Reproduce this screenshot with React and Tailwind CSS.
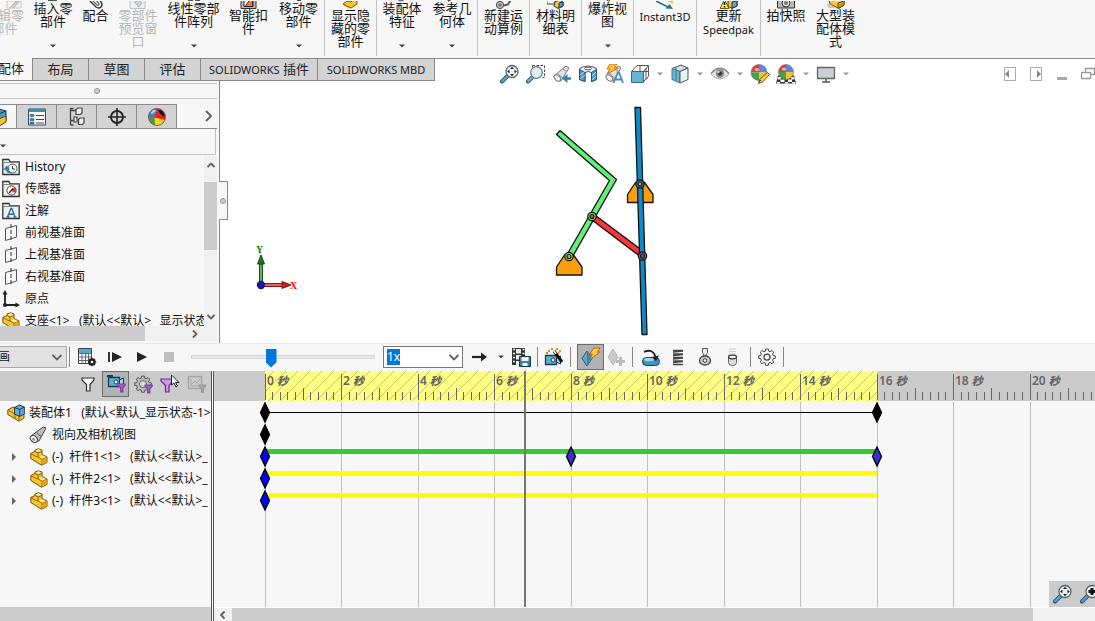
import React from "react";

const FONT = "font-['Noto_Sans','Noto_Sans_CJK_SC',sans-serif]";

function Svg({ w = 20, h = 20, className = "", children }) {
  return (
    <svg width={w} height={h} viewBox={`0 0 ${w} ${h}`} className={`block shrink-0 ${className}`} fill="none" aria-hidden="true">
      {children}
    </svg>
  );
}

function IconButton({ label, className = "h-5 w-5", children }) {
  return (
    <button type="button" aria-label={label} title={label} className={`flex shrink-0 items-center justify-center ${className}`}>
      {children}
    </button>
  );
}

function Caret({ className = "text-[#444]" }) {
  return (
    <svg width="6" height="4" viewBox="0 0 6 4" className={`block ${className}`} aria-hidden="true">
      <path d="M0 .5h6L3 3.5z" fill="currentColor" />
    </svg>
  );
}

/* ---------- ribbon ---------- */

const ribbonArt = {
  pencil: <><path d="M1 7V0h14v7z" fill="#f2f2f2" stroke="#ccc" /><path d="M4 7 11 0M7 7l7-8" stroke="#bbb" strokeWidth="1.5" /></>,
  box: <path d="M4 5h9v2H4z" fill="#555" />,
  clip: <><path d="M2-1l7 7q3 2 5 0 2-2 0-5L12-2" stroke="#333" strokeWidth="1.4" /><path d="M5-1l5 5q2 1 2-1L9-1" stroke="#555" strokeWidth="1.2" /></>,
  preview: <><path d="M1-1v8.500h15v-8.500" fill="#efefef" stroke="#c4c4c4" /><path d="M5 1l5-2 3 3-3 4z" fill="#d0d0d0" stroke="#b5b5b5" /></>,
  pattern: <path d="M3 5h5v2H3zM10 5h5v2h-5z" fill="#555" />,
  smart: <><path d="M1-1v8.500h15v-8.500" fill="#bbb" stroke="#333" /><path d="M4-1h9v6.500H4z" fill="#fff" stroke="#222" /><path d="M5.500 5l4-6h3v6" fill="#f08020" stroke="#622" /></>,
  move: <path d="M7 4h4v3H7z" fill="#444" />,
  show: <><path d="M1 3l4-3 4 1 2-2 4 1v3l-6 4z" fill="#fcc929" stroke="#7a5c00" /><path d="M2 4l6 3" stroke="#b08000" /></>,
  feature: <circle cx="8" cy="4" r="3.500" fill="#777" />,
  reference: <path d="M8 0v6m-3 1 3-2" stroke="#345" strokeWidth="2" />,
  motion: <><circle cx="5" cy="4" r="3.600" fill="#bbb" stroke="#444" /><circle cx="5" cy="4" r="1" fill="#fff" stroke="#444" /><path d="M9 4.500l4-1 3-5" stroke="#555" strokeWidth="2" /></>,
  bom: <><path d="M0-1h8v4H0z" fill="#fff" stroke="#345" /><path d="M8 1l4-2 4 2v4l-5 2.500-4-2.500z" fill="#fcc929" stroke="#333" /><path d="M12 2v5l4-2V1z" fill="#4d9cc5" stroke="#234" /></>,
  explode: <path d="M5 4l4-4 4 3-3 4.500z" fill="#fcc929" stroke="#7a5c00" />,
  instant: <><path d="M0 0l12 6" stroke="#2b7299" strokeWidth="1.600" /><path d="M17 8 9.500 7.500l4-4.500z" fill="#2b7299" /><path d="M9-1h8v4z" fill="#fcc929" /></>,
  update: <><path d="M8 0l5-2 4 2v5l-5 2.500-4-2.500z" fill="#fcc929" stroke="#333" /><path d="M12 1v6l5-2V0z" fill="#69a8ca" stroke="#234" /><path d="M4.500-1.500l4.500 9h-9z" fill="#ffe34d" stroke="#7a5c00" /><path d="M4.500 1v3m0 1v1.400" stroke="#111" strokeWidth="1.400" /></>,
  camera: <><path d="M.5-1h17v8H.5z" fill="#bbb" stroke="#333" /><circle cx="9" cy="2" r="4" fill="#ddd" stroke="#333" /><circle cx="9" cy="2" r="2" fill="#777" /></>,
  large: <><path d="M2 0l6-3 9 3v4l-5 3.500-9-4.500z" fill="#fcc929" stroke="#665000" /><path d="M11 2v5.500l6-3.500V0z" fill="#d99b10" stroke="#665000" /><path d="M0 4h4m-3 2h7" stroke="#999" /></>,
};

const ribbon = [
  { art: "pencil", lines: ["编辑零", "部件"], w: "w-7", off: true, cut: true },
  { art: "box", lines: ["插入零", "部件"], w: "w-[50px]", drop: true },
  { art: "clip", lines: ["配合"], w: "w-[35px]" },
  { art: "preview", lines: ["零部件", "预览窗", "口"], w: "w-[50px]", off: true },
  { art: "pattern", lines: ["线性零部", "件阵列"], w: "w-[61px]", drop: true },
  { art: "smart", lines: ["智能扣", "件"], w: "w-[49px]" },
  { art: "move", lines: ["移动零", "部件"], w: "w-[51px]", drop: true, end: true },
  { art: "show", lines: ["显示隐", "藏的零", "部件"], w: "w-[51px]", end: true },
  { art: "feature", lines: ["装配体", "特征"], w: "w-[50px]", drop: true },
  { art: "reference", lines: ["参考几", "何体"], w: "w-[50px]", drop: true, end: true },
  { art: "motion", lines: ["新建运", "动算例"], w: "w-[51px]", end: true },
  { art: "bom", lines: ["材料明", "细表"], w: "w-[51px]", end: true },
  { art: "explode", lines: ["爆炸视", "图"], w: "w-[51px]", drop: true, end: true },
  { art: "instant", lines: ["Instant3D"], w: "w-[62px]", end: true },
  { art: "update", lines: ["更新", "Speedpak"], w: "w-[63px]", end: true },
  { art: "camera", lines: ["拍快照"], w: "w-[50px]" },
  { art: "large", lines: ["大型装", "配体模", "式"], w: "w-[49px]" },
];

function RibbonItem({ item }) {
  return (
    <>
      <button
        type="button"
        disabled={item.off}
        className={`flex h-[55px] shrink-0 flex-col overflow-hidden ${item.w} ${item.cut ? "items-end pr-1" : "items-center"} ${item.off ? "text-[#b8b8b8]" : "text-[#111]"}`}
      >
        <span className={`flex items-end overflow-hidden ${item.drop ? "h-0.5" : "h-[9px]"}`}>
          <Svg w={18} h={8}>{ribbonArt[item.art]}</Svg>
        </span>
        <span className="flex flex-1 flex-col text-center text-[13px] leading-[13px] whitespace-nowrap">
          {item.lines.map((l) => (
            <span key={l} className={/^[A-Z]/.test(l) ? "pt-px text-[11px]" : ""}>{l}</span>
          ))}
        </span>
        {item.drop && <span className="pb-[7px]"><Caret /></span>}
      </button>
      {item.end && <span className="h-14 w-px shrink-0 bg-[#c3c3c3]" />}
    </>
  );
}

/* ---------- command tabs and view toolbar ---------- */

const tabs = [
  ["", "布局", "w-14"],
  ["", "草图", "w-14"],
  ["", "评估", "w-14"],
  ["SOLIDWORKS", " 插件", "w-[117px]"],
  ["SOLIDWORKS MBD", "", "w-[118px]"],
];

function Sphere({ cx, cy, r }) {
  return (
    <>
      <path d={`M${cx} ${cy}V${cy - r}A${r} ${r} 0 0 0 ${cx - r} ${cy}z`} fill="#e23b3b" />
      <path d={`M${cx} ${cy}V${cy - r}A${r} ${r} 0 0 1 ${cx + r} ${cy}z`} fill="#5b86e0" />
      <path d={`M${cx} ${cy}H${cx - r}A${r} ${r} 0 0 0 ${cx} ${cy + r}z`} fill="#37a948" />
      <path d={`M${cx} ${cy}H${cx + r}A${r} ${r} 0 0 1 ${cx} ${cy + r}z`} fill="#f5c32c" />
      <circle cx={cx} cy={cy} r={r} stroke="#777" strokeWidth=".7" />
      <ellipse cx={cx - 2} cy={cy - 3} rx="2.4" ry="1.6" fill="#fff" opacity=".6" />
    </>
  );
}

function Magnifier({ plus }) {
  return (
    <Svg>
      <path d="M2 17.5 8 11.5" stroke="#24506b" strokeWidth="4" strokeLinecap="round" />
      <path d="M2.3 17.2 8 11.5" stroke="#5aa4cb" strokeWidth="2.4" strokeLinecap="round" />
      <circle cx="12" cy="7.5" r="6" fill="#eaf4f8" stroke="#5d6468" strokeWidth="1.3" />
      {plus
        ? <path d="M12 4v7M8.5 7.5h7" stroke="#111" strokeWidth="3" />
        : <path d="M12 2.700l2 2.300h-4zM12 12.300l2-2.300h-4zM7.200 7.500l2.300-2v4zM16.800 7.500l-2.300-2v4z" fill="#222" />}
    </Svg>
  );
}

const Telescope = () => (
  <>
    <path d="M2 12 14 2l3 2-8 13q-5 0-7-5z" fill="#e2e2e2" stroke="#777" />
    <path d="M6 9.500q1 3 4.500 4M11 5l3.500 2.500" stroke="#888" />
    <ellipse cx="5.300" cy="14" rx="2.400" ry="3.800" transform="rotate(-48 5.300 14)" fill="#f6f6f6" stroke="#777" />
  </>
);

const viewTools = [
  ["整屏显示全图", <Magnifier />],
  ["局部放大", (
    <Svg>
      <path d="M6.500 1.500h12v12" stroke="#444" strokeDasharray="2.500 1.500" />
      <path d="M6.500 1.500v3M18.500 13.500h-3" stroke="#444" strokeDasharray="2 1.500" />
      <path d="M2 17.500l4-4" stroke="#24506b" strokeWidth="4" strokeLinecap="round" />
      <path d="M2.300 17.200l4-4" stroke="#6fb4d6" strokeWidth="2.400" strokeLinecap="round" />
      <circle cx="10.500" cy="8.500" r="5.800" fill="#dfecf1" stroke="#6d7478" strokeWidth="1.200" />
    </Svg>
  )],
  ["上一视图", <Svg><Telescope /><path d="M19 14.500h-4" stroke="#3782ad" strokeWidth="2.500" /><path d="M10 14.500l5.500-4.500v9z" fill="#3782ad" /></Svg>],
  ["剖面视图", (
    <Svg>
      <path d="M1.500 4.500q8-5 17 0v11l-5 2V8.500q-3-2-6.500 0v9l-5.500-2z" fill="#e8edf0" stroke="#555" />
      <path d="M1.500 5.500 7 8.500v9l-5.500-2zM18.500 5.500l-5 3v9l5-2z" fill="#4b9bc4" stroke="#24506b" />
      <path d="M2 11l4-3M2 15l5-4M14 12l4-4M14 16l4-4" stroke="#b9dcec" />
      <ellipse cx="10" cy="4.500" rx="3.500" ry="1.300" fill="#fff" stroke="#555" />
    </Svg>
  )],
  ["动态注解视图", (
    <Svg>
      <Telescope />
      <path d="M6 0h7l-3 4h4L3 10l3-5H3z" fill="#ffc933" stroke="#d9641b" />
      <path d="M9.500 19 14 8.500h1L19 19M11.500 15.500h6" stroke="#4a8db0" strokeWidth="1.800" />
    </Svg>
  )],
  ["视图定向", (
    <Svg>
      <path d="M1.500 7.500 7 1.500h11.500v11l-5 5" fill="#fff" stroke="#555" />
      <path d="M13.500 7.500l5-6M10 1.500v6M1.500 7.500h17M16 4v11" stroke="#555" />
      <path d="M1.500 7.500h12v11h-12z" fill="#69b1d3" stroke="#2f6b8c" />
    </Svg>
  ), true],
  ["显示样式", (
    <Svg>
      <path d="M2 4.500 11 1l7 3-8 3.500z" fill="#c9e4f0" stroke="#555" />
      <path d="M2 4.500l8 3V19l-8-3.500z" fill="#6db4d4" stroke="#3f7896" />
      <path d="M10 7.500 18 4v11.500L10 19z" fill="#e6f2f7" stroke="#555" />
      <path d="M6 3v13.500" stroke="#3f7896" />
    </Svg>
  ), true],
  ["隐藏/显示项目", (
    <Svg>
      <path d="M1 10q9-11 18 0-9 10-18 0z" fill="#e6e6e6" stroke="#aaa" />
      <circle cx="10" cy="9.500" r="4.200" fill="#8a8a8a" />
      <circle cx="10" cy="9.500" r="2" fill="#333" />
      <path d="M1 9.500Q10-1 19 9.500" stroke="#888" strokeWidth="1.300" />
      <circle cx="8.500" cy="8" r="1" fill="#fff" />
    </Svg>
  ), true],
  ["编辑外观", (
    <Svg>
      <Sphere cx={9} cy={8.500} r={8} />
      <path d="M17.500 8.500l2 2-7 7.500-4 1.500 1-4z" fill="#ffd23f" stroke="#6b4a12" />
      <path d="M9 18l2-2" stroke="#333" />
    </Svg>
  )],
  ["应用布景", (
    <Svg>
      <path d="M2 11.500h16l2 8H0z" fill="#333" />
      <path d="M2 13h3l-.5 2.500h-3zM15 13h3l.5 2.500h-3zM4.500 15.500h4V18h-4zM12 15.500h4V18h-4zM9 18h3v1.500H9zM1 18h3v1.500H1zM16 18h3v1.500h-3z" fill="#fff" />
      <Sphere cx={10} cy={8} r={7.500} />
    </Svg>
  ), true],
  ["视图设定", (
    <Svg>
      <path d="M1.500 3.500h17v11h-17z" fill="#c9d0d3" stroke="#666" strokeWidth="1.300" />
      <path d="M10 15v3M6 18h8" stroke="#555" strokeWidth="1.500" />
    </Svg>
  ), true],
];

const windowTools = [
  ["左侧窗格", <Svg><path d="M4.500 3.500h11v13h-11z" stroke="#a8a8a8" /><path d="M9 6v8l-4-4z" fill="#888" /></Svg>],
  ["右侧窗格", <Svg><path d="M4.500 3.500h11v13h-11z" stroke="#a8a8a8" /><path d="M11 6v8l4-4z" fill="#888" /></Svg>],
  ["最小化", <Svg><path d="M5 13h10v3H5z" fill="#a8a8a8" /></Svg>],
  ["还原", <Svg><path d="M3.500 8.500h9v6h-9zM7.500 8V4.500h9v6h-4" stroke="#999" strokeWidth="1.300" /></Svg>],
];

/* ---------- feature manager ---------- */

const Part = ({ size = 18 }) => (
  <svg width={size} height={size} viewBox="0 0 18 18" fill="none" className="block shrink-0" aria-hidden="true">
    <path d="M.8 5.500 5 3.500V2L8.500.800 12 2v4.500l5 2.500v5.500L11.500 17.200.8 10.500z" fill="#fcc62b" stroke="#6b5210" />
    <path d="M5 3.500 8 5v4l4 2v0l5-2M.8 5.500 5 8M8 5l4-1.500M12 11v6M5 8l3 1" stroke="#8b6a10" />
    <path d="M5.500 2.400 8.500 1.300l3 1.100L8.500 3.800zM9 8.500l3-1.300L16 9l-4 1.700z" fill="#ffe88a" />
    <path d="M12.300 11.400l4.300-2v5l-4.300 2.200z" fill="#e5a313" />
  </svg>
);

const Folder = ({ children }) => (
  <Svg w={18} h={18}>
    <path d="M.8 16.500V1.500h6l1.500 2.500h8.900v12.500z" fill="#efefef" stroke="#333" strokeWidth="1.300" />
    <path d="M1 4.500h16" stroke="#888" />
    {children}
  </Svg>
);

const Plane = () => (
  <Svg w={18} h={18}>
    <path d="M3.500 4.500v12l11-3.500V1.500z" stroke="#555" />
    <path d="M9 0v18" stroke="#333" strokeDasharray="4 2" />
  </Svg>
);

const features = [
  ["History", <Folder><circle cx="10.500" cy="10.500" r="4.500" fill="#fff" stroke="#555" /><path d="M10.500 8v3h2.500" stroke="#333" /><path d="M4 10.500q1 4.500 5 4M2.800 11l2-2.500 2 2.500z" stroke="#2d7faa" fill="#2d7faa" strokeWidth="1.300" /></Folder>],
  ["传感器", <Folder><circle cx="9.500" cy="10.500" r="4.600" fill="#fff" stroke="#444" /><path d="M9.500 10.500l4-2.500v4.500z" fill="#e23b1d" stroke="#e23b1d" /><path d="M7 13l4.500-5" stroke="#222" strokeWidth="1.200" /></Folder>],
  ["注解", <Folder><path d="M5.500 15 9 6.500h.8L13 15M6.500 12.200h5.500M4.500 15h3M11.500 15h3" stroke="#2d6f96" strokeWidth="1.400" /></Folder>],
  ["前视基准面", <Plane />],
  ["上视基准面", <Plane />],
  ["右视基准面", <Plane />],
  ["原点", <Svg w={18} h={18}><path d="M3 3v12h12" stroke="#222" strokeWidth="1.800" /><path d="M3 0l2.500 4.500h-5zM18 15l-4.500 2.500v-5z" fill="#222" /><circle cx="3" cy="15" r="2" fill="#222" /></Svg>],
  ["支座<1>   (默认<<默认>_ 显示状态", <Part />],
];

const panelTabs = [
  ["属性", (
    <Svg>
      <path d="M1.500 2h17v16h-17z" fill="#fff" stroke="#2d4c5e" />
      <path d="M1.500 2h17v3h-17z" fill="#3f8db5" />
      <path d="M3 7.500h4v2H3zM3 11.500h4v2H3zM3 15h4v2H3z" fill="#3f8db5" stroke="#2d4c5e" strokeWidth=".6" />
      <path d="M9 8.500h8M9 12.500h8M9 16h8" stroke="#2d4c5e" strokeWidth="1.200" />
    </Svg>
  )],
  ["配置", (
    <Svg>
      <path d="M3.500 1v17M3 3.500h7M3 13.500h7M3.500 1.500h3M3.500 18h3" stroke="#444" strokeWidth="1.300" />
      <path d="M9 2.500 11 1h4v5l-1.500 1.500H9zM11.500 12.500l1.500-1.500h4v5l-1.500 1.500h-4zM7 10h3v5H7z" fill="#eee" stroke="#444" strokeWidth="1.200" />
    </Svg>
  )],
  ["标注专家", <Svg><circle cx="10" cy="10" r="6" stroke="#222" strokeWidth="1.800" /><path d="M10 1v18M1 10h18" stroke="#222" strokeWidth="1.600" /></Svg>],
  ["显示", (
    <Svg>
      <circle cx="10" cy="10" r="8.500" fill="#e0241f" />
      <path d="M1.600 9Q2 3 8 1.800L10 4 7 10z" fill="#3f7fe0" />
      <path d="M1.600 9l6 1.500L8 18.200Q2 16 1.600 9z" fill="#2ca944" />
      <path d="M7.500 10.500 18 13q-3 6.500-10 5.200z" fill="#ffd21f" />
      <path d="M11 2.500q6 1 7 7-5-1-7-7z" fill="#111" />
      <path d="M4 5q2-3 5-2-1 3-5 4z" fill="#fff" opacity=".6" />
      <circle cx="10" cy="10" r="8.500" stroke="#555" strokeWidth=".8" />
    </Svg>
  )],
];

function Chevron({ d, className = "" }) {
  return (
    <Svg w={10} h={10} className={className}>
      <path d={d} stroke="#606060" strokeWidth="1.800" />
    </Svg>
  );
}
const UP = "M1.500 7 5 3.500 8.500 7";
const DOWN = "M1.500 3 5 6.500 8.500 3";
const THIN_DOWN = "M.5 3 5 7.500 9.500 3";
const LEFT = "M6.500 1.500 3 5l3.500 3.500";
const RIGHT = "M3 1.500 6.500 5 3 8.500";

function FeaturePanel() {
  return (
    <aside className="relative flex w-[220px] shrink-0 flex-col border-r border-[#888] bg-[#f7f7f7] pt-0.5 pr-0.5 pb-0.5">
      <div className="flex h-4 items-center justify-center border-y border-[#c6c6c6] pr-6">
        <span className="h-1.5 w-1.5 rounded-full border border-[#999] bg-[#ccc]" />
      </div>
      <div className="mt-[5px] flex h-[25px] border-b border-[#8c8c8c]">
        <button type="button" aria-label="设计树" className="flex w-4 items-center justify-end overflow-hidden border-t border-[#8c8c8c]">
          <Svg className="mr-[9px]">
            <path d="M7 5l5-3 7 2v10l-7 5-8-4z" fill="#4c9cc3" stroke="#234" />
            <path d="M12 12l7-3v6l-7 4z" fill="#fcc62b" stroke="#543" />
            <path d="M12 7l7-3M12 7v12" stroke="#234" />
          </Svg>
        </button>
        <div className="flex border-r border-[#8c8c8c]">
          {panelTabs.map(([label, icon]) => (
            <IconButton key={label} label={label} className="w-10 border-t border-l border-[#8c8c8c] bg-[#d3d3d3]">{icon}</IconButton>
          ))}
        </div>
        <IconButton label="更多" className="mr-0.5 ml-auto w-3">
          <Svg w={12} h={14}><path d="M3 2l5 5-5 5" stroke="#666" strokeWidth="2" /></Svg>
        </IconButton>
      </div>
      <div className="mr-px flex h-[26px] items-center border-r border-b border-[#c3c3c3] pt-2">
        <Caret />
      </div>
      <div className="mt-px flex h-[170px]">
        <ul className="min-w-0 flex-1 overflow-hidden">
          {features.map(([name, icon]) => (
            <li key={name} className="flex h-[22px] items-center gap-[5px] pl-0.5 text-[12px] whitespace-pre text-[#111]">
              {icon}
              <span>{name}</span>
            </li>
          ))}
        </ul>
        <div className="flex w-[13px] flex-col items-center bg-[#f0f0f0]">
          <Chevron d={UP} className="mt-1 mb-3" />
          <span className="h-[68px] w-full bg-[#cdcdcd]" />
          <Chevron d={DOWN} className="mt-auto mb-1" />
        </div>
      </div>
      <div className="flex h-[15px] items-center bg-[#f0f0f0]">
        <span className="h-full w-2/3 bg-[#cdcdcd]" />
        <Chevron d={RIGHT} className="mr-[17px] ml-auto" />
      </div>
      <div className="absolute top-[100px] -right-[9px] z-10 flex h-[39px] w-[9px] items-center justify-center border border-l-0 border-[#888] bg-[#f7f7f7]">
        <span className="h-1.5 w-1.5 rounded-full border border-[#999] bg-[#ccc]" />
      </div>
    </aside>
  );
}

/* ---------- model view ---------- */

function Joint({ x, y, ring, core }) {
  return (
    <>
      <circle cx={x} cy={y} r="4.200" fill={ring} stroke="#111" strokeWidth="1.200" />
      <circle cx={x} cy={y} r="2" fill={core} stroke="#111" strokeWidth="1.100" />
    </>
  );
}

function ModelView() {
  return (
    <main className="min-w-0 flex-1 bg-white">
      <svg width="100%" height="260" className="block" fill="none" role="img" aria-label="连杆机构">
        <g transform="translate(-220 -81)">
          <g stroke="#111" strokeWidth="1.300" strokeLinejoin="round">
            <path d="M556.500 275v-8l8-12h9l8.500 12v8z" fill="#ff9e0d" />
            <path d="M627.500 202.500v-8l8-12h9l8.500 12v8z" fill="#ff9e0d" />
            <path d="M595.500 215.500 645 252.500 641.500 257.500 592 220z" fill="#fb3438" />
            <path d="M560 130.500 616.500 179.500 571.500 258.500 566.500 255.500 609.500 180.500 556.500 134.500z" fill="#62ef7c" />
            <path d="M635 107.500h5.500L647 334.500h-5z" fill="#0e8bcb" />
          </g>
          <Joint x={569} y={256.500} ring="#62ef7c" core="#ff9e0d" />
          <Joint x={592} y={216.500} ring="#62ef7c" core="#fb3438" />
          <Joint x={640} y={184} ring="#0e8bcb" core="#ff9e0d" />
          <Joint x={642.500} y={256} ring="#0e8bcb" core="#fb3438" />
          <path d="M259.500 284v-20h3v20z" fill="#67ad68" stroke="#174f17" />
          <path d="M261 255l3.500 9h-7z" fill="#1d761d" stroke="#124d12" />
          <path d="M264 283.500h19v3h-19z" fill="#e26565" stroke="#8f1414" />
          <path d="M291 285l-9 3.500v-7z" fill="#cf1818" stroke="#8f1414" />
          <circle cx="261" cy="285" r="4.200" fill="#16167e" />
          <path d="M259 283h4l-4 4h4" stroke="#1a1aff" />
          <text x="256" y="253" fill="#0a800a" className="font-['Liberation_Serif',serif] text-[10px] font-bold">Y</text>
          <text x="290" y="289" fill="#f00" className="font-['Liberation_Serif',serif] text-[10px] font-bold">X</text>
        </g>
      </svg>
    </main>
  );
}

/* ---------- motion toolbar ---------- */

const Sep = () => <span className="h-5 w-px shrink-0 bg-[#888]" />;

const CameraBody = () => (
  <>
    <path d="M1.500 8.500h11v9h-11z" fill="#62afd2" stroke="#173b50" strokeWidth="1.300" />
    <path d="M12.500 11l4-2v8l-4-2z" fill="#a9d3e6" stroke="#173b50" />
    <circle cx="9" cy="13" r="2" fill="#eaf6fb" stroke="#173b50" />
  </>
);

const Calc = () => (
  <Svg>
    <path d="M1.500 1.500h13v15h-13z" fill="#fff" stroke="#444" />
    <path d="M2 2h12v4H2z" fill="#5aa4cb" />
    <path d="M1.500 6.500h13M1.500 10h13M1.500 13.500h13M5 6v10M8.500 6v10M11.500 6v10" stroke="#666" />
    <circle cx="15" cy="15" r="2.500" fill="#fff" stroke="#222" strokeWidth="2.400" />
    <path d="M15 10.800v8.400M10.800 15h8.400M12 12l6 6M18 12l-6 6" stroke="#222" strokeWidth="1.200" />
    <circle cx="15" cy="15" r="1.300" fill="#fff" />
  </Svg>
);

const gearPath = "M8.700 2h2.600l.4 2.100 1.500.6L15 3.500l1.700 1.700-1.100 1.800.6 1.500 2.100.4v2.400l-2.100.4-.6 1.500 1.100 1.800L15 16.700l-1.800-1.100-1.500.6-.4 2.100H8.700l-.4-2.100-1.500-.6L5 16.700 3.300 15l1.100-1.800-.6-1.500-2.100-.4V8.900l2.100-.4.6-1.500-1.100-1.800L5 3.500l1.800 1.200 1.500-.6z";

function MotionToolbar() {
  return (
    <div className="flex h-[27px] shrink-0 items-center gap-[7px] bg-[#f7f7f7] pb-0.5">
      <div className="flex items-center gap-0.5">
        <div className="flex h-[22px] w-[67px] items-center justify-end overflow-hidden border-y border-r border-[#aaa] bg-[#e1e1e1]">
          <select aria-label="算例类型" className="w-[78px] shrink-0 appearance-none text-[12px] text-[#111]">
            <option>动画</option>
          </select>
          <Chevron d={THIN_DOWN} className="-ml-3 mr-1" />
        </div>
        <Sep />
      </div>
      <IconButton label="计算"><Calc /></IconButton>
      <IconButton label="从头播放"><Svg><path d="M5 5v10" stroke="#333" strokeWidth="2" /><path d="M8 5l10 5-10 5z" fill="#222" /></Svg></IconButton>
      <IconButton label="播放"><Svg><path d="M6 5l10 5-10 5z" fill="#222" /></Svg></IconButton>
      <IconButton label="停止"><Svg><path d="M6 5h10v10H6z" fill="#bfbfbf" /></Svg></IconButton>
      <input
        type="range"
        aria-label="时间"
        defaultValue="43"
        className="ml-1.5 h-5 w-[184px] shrink-0 appearance-none bg-transparent [&::-webkit-slider-runnable-track]:h-1 [&::-webkit-slider-runnable-track]:border [&::-webkit-slider-runnable-track]:border-[#d6d6d6] [&::-webkit-slider-runnable-track]:bg-[#e7eaea] [&::-webkit-slider-thumb]:-mt-[7px] [&::-webkit-slider-thumb]:h-[19px] [&::-webkit-slider-thumb]:w-[11px] [&::-webkit-slider-thumb]:appearance-none [&::-webkit-slider-thumb]:bg-[#0078d7] [&::-webkit-slider-thumb]:[clip-path:polygon(0_0,100%_0,100%_72%,50%_100%,0_72%)]"
      />
      <div className="ml-px flex h-[22px] w-20 shrink-0 items-center border border-[#777] bg-white pl-[3px]">
        <input aria-label="播放速度" defaultValue="1x" className="h-4 w-[13px] bg-[#0078d7] text-[12px] text-white" />
        <Chevron d={THIN_DOWN} className="mr-[3px] ml-auto" />
      </div>
      <IconButton label="播放模式"><Svg><path d="M2 10h11" stroke="#222" strokeWidth="2.200" /><path d="M17 10l-6 4.500v-9z" fill="#222" /></Svg></IconButton>
      <IconButton label="模式选项" className="h-5 w-[7px]"><Caret /></IconButton>
      <div className="flex items-center gap-1.5">
        <IconButton label="保存动画">
          <Svg>
            <path d="M1 1h13v17H1z" fill="#333" />
            <path d="M5 2h5v4.500H5zM5 8h5v4.500H5zM5 14h4v4H5z" fill="#e9eef0" />
            <path d="M2 2.500h2m-2 4h2m-2 4h2m-2 4h2m7.500-12h2m-2 4h2" stroke="#fff" strokeWidth="1.600" />
            <path d="M8.500 9.500h11v10h-11z" fill="#3a7fa7" stroke="#17384c" />
            <path d="M10.500 10h7v4h-7zM11.500 16h5v3h-5z" fill="#f3f3f3" />
          </Svg>
        </IconButton>
        <Sep />
        <IconButton label="动画向导">
          <Svg>
            <CameraBody />
            <path d="M10 4l8 11" stroke="#111" strokeWidth="3" />
            <path d="M10 4l2 2.800" stroke="#fff" strokeWidth="1.600" />
            <path d="M4 3h2v2H4zM7 1h2v2H7zM12 1h2v2h-2zM15 3h2v2h-2zM2 5h2v2H2zM14 5h1.500v1.500H14z" fill="#e08a18" />
          </Svg>
        </IconButton>
        <Sep />
        <div className="flex items-center gap-0.5">
          <IconButton label="自动键码" className="h-[26px] w-[27px] border border-[#6d6d6d] bg-[#b2b2b2]">
            <Svg>
              <path d="M6 4l5 7.500L6 19l-5-7.500z" fill="#5ba9cf" stroke="#2d5971" />
              <path d="M6 4v15l5-7.500z" fill="#3d86ad" />
              <path d="M13 1h6l-3 4h3L8 13l3.500-6H8.500z" fill="#ffd23b" stroke="#d0541a" />
            </Svg>
          </IconButton>
          <IconButton label="添加键码"><Svg><path d="M7 2l5 8-5 8-5-8z" fill="#c9c9c9" stroke="#bbb" /><path d="M14.500 10v9M10 14.500h9" stroke="#bdbdbd" strokeWidth="3" /></Svg></IconButton>
        </div>
        <Sep />
        <div className="flex items-center gap-[7px] px-0.5">
          <IconButton label="马达">
            <Svg>
              <rect x="1.500" y="10.500" width="17" height="8" rx="4" fill="#4196c1" stroke="#173b50" />
              <ellipse cx="8" cy="12.500" rx="5" ry="1.800" fill="#a6d5e9" />
              <path d="M3 5q9-4 11.500 5" stroke="#222" strokeWidth="1.800" />
              <path d="M11 10l7-1.500-3 6z" fill="#222" />
            </Svg>
          </IconButton>
          <IconButton label="弹簧"><Svg><path d="M5 3.500h10M5 7h10M5 10.500h10M5 14h10M5 17.500h10M5 5.200l10-1M5 8.700l10-1M5 12.200l10-1M5 15.700l10-1" stroke="#444" strokeWidth="1.300" /></Svg></IconButton>
          <IconButton label="接触">
            <Svg>
              <path d="M7.500 1.500h5v4L11 8v3H9V8L7.500 5.500z" fill="#eee" stroke="#555" />
              <ellipse cx="10" cy="13.500" rx="5.500" ry="4.500" fill="#ccc" stroke="#444" strokeWidth="1.300" />
              <circle cx="10" cy="13.500" r="1.800" fill="#fff" stroke="#333" />
            </Svg>
          </IconButton>
          <IconButton label="引力">
            <Svg>
              <path d="M7 2h7M7 4.500h7M7 7h7" stroke="#ccc" />
              <path d="M6.500 9.500h8v6q0 3-4 3t-4-3z" fill="#ddd" stroke="#666" />
              <ellipse cx="10.500" cy="10" rx="4" ry="1.800" fill="#f8f8f8" stroke="#333" strokeWidth="1.200" />
            </Svg>
          </IconButton>
        </div>
        <Sep />
        <IconButton label="属性"><Svg><path d={gearPath} fill="#f4f4f4" stroke="#444" /><circle cx="10" cy="10.100" r="3" fill="#fff" stroke="#444" strokeWidth="1.300" /></Svg></IconButton>
        <Sep />
      </div>
    </div>
  );
}

/* ---------- motion study ---------- */

const Funnel = ({ x, y, s, fill, stroke }) => (
  <path transform={`translate(${x} ${y}) scale(${s})`} d="M0 0h12v2L8 6.500V13H4.500V6.500L0 2z" fill={fill} stroke={stroke} strokeWidth={1.200 / s} />
);

const filters = [
  ["无过滤", <Svg><Funnel x={3} y={4} s={1} fill="#f4f4f4" stroke="#333" /></Svg>],
  ["过滤动画", <Svg><g transform="translate(1 -5)"><CameraBody /></g><path d="M1 2h6" stroke="#173b50" strokeWidth="2" /><Funnel x={12} y={10} s={0.600} fill="#a25fc6" stroke="#8142a5" /></Svg>, true],
  ["过滤驱动", <Svg><path d={gearPath} fill="#bbb" stroke="#555" /><circle cx="10" cy="10.100" r="3.500" fill="#ddd" stroke="#666" /><Funnel x={12} y={11} s={0.600} fill="#a25fc6" stroke="#8142a5" /></Svg>],
  ["过滤选定", <Svg><Funnel x={1} y={5} s={1} fill="#c99ae3" stroke="#6b2a90" /><path d="M11.500 1v10l2.500-2 2 4 1.500-1-2-3.500H19z" fill="#fff" stroke="#222" /></Svg>],
  ["过滤结果", <Svg><path d="M1.500 2.500h13v12h-13z" stroke="#a7a7a7" strokeWidth="1.500" /><path d="M4 5v7h8M5 10l3-3 2 2 3-4" stroke="#a7a7a7" /><Funnel x={12} y={11} s={0.550} fill="#aaa" stroke="#999" /></Svg>],
];

const studyRows = ["(-)  杆件1<1>   (默认<<默认>_", "(-)  杆件2<1>   (默认<<默认>_", "(-)  杆件3<1>   (默认<<默认>_"];

function StudyTree() {
  const row = "flex h-[22px] items-center whitespace-pre text-[12px] text-[#111]";
  return (
    <section className="flex w-[211px] shrink-0 flex-col bg-[#f7f7f7]">
      <div className="flex h-[30px] items-start justify-end bg-[#cbcbcb] pr-px">
        {filters.map(([label, icon, on]) => (
          <IconButton key={label} label={label} className={`h-[26px] w-[27px] ${on ? "border border-[#6d6d6d] bg-[#b2b2b2]" : ""}`}>{icon}</IconButton>
        ))}
      </div>
      <ul className="flex-1 overflow-hidden pt-px">
        <li className={`${row} gap-1 pl-[7px]`}>
          <Svg w={18} h={18}>
            <path d="M.8 6 6 3l11 6v5l-5 3.200L.8 10.500z" fill="#fcc62b" stroke="#6b5210" />
            <path d="M1 6l7 4v5M12 12v5" stroke="#8b6a10" />
            <path d="M7.500 3.500 12.500 1 17.300 3v7l-4.500 2.500-5.300-2.500z" fill="#69aed0" stroke="#173b50" />
            <path d="M7.500 3.500l5.300 2 4.500-2.500M12.800 5.500v7" stroke="#173b50" />
          </Svg>
          <span>装配体1   (默认&lt;默认_显示状态-1&gt;</span>
        </li>
        <li className={`${row} gap-1 pl-7`}>
          <Svg>
            <path d="M3 11 15 2l3 1-7 13q-5 1-8-5z" fill="#bdbdbd" stroke="#444" />
            <ellipse cx="5.800" cy="14" rx="3" ry="4" transform="rotate(-45 5.800 14)" fill="#eee" stroke="#444" />
            <path d="M9 7.500q1 3 4.500 4" stroke="#555" />
            <circle cx="5.500" cy="14.300" r="1.500" fill="#999" />
          </Svg>
          <span>视向及相机视图</span>
        </li>
        {studyRows.map((name) => (
          <li key={name} className={`${row} pl-[11px]`}>
            <IconButton label="展开" className="mr-[13px] h-2 w-1.5"><Svg w={6} h={8}><path d="M1 0l4 4-4 4z" fill="#666" /></Svg></IconButton>
            <Part />
            <span className="ml-1">{name}</span>
          </li>
        ))}
      </ul>
      <div className="h-3.5 bg-[#cdcdcd]" />
    </section>
  );
}

const ORIGIN = 51;
const SECOND = 38.25;
const END = 663;
const seconds = [0, 2, 4, 6, 8, 10, 12, 14, 16, 18, 20, 22, 24];
const ticks = Array.from({ length: 130 }, (_, i) => i).filter((i) => i % 10 !== 0);
const tx = (s) => Math.floor(ORIGIN + s * SECOND);

function Key({ x, y, fill }) {
  return <path d={`M${x} ${y - 9.500}l4.500 9.500-4.500 9.500-4.500-9.500z`} fill={fill} stroke="#000" strokeWidth="1.300" />;
}

function Timeline() {
  return (
    <section className="relative flex min-w-0 flex-1 flex-col bg-[#f7f7f7]">
      <svg width="100%" className="block min-h-0 flex-1" fill="none" role="img" aria-label="时间线">
        <defs>
          <pattern id="hatch" width="12" height="12" patternUnits="userSpaceOnUse">
            <path d="M-1 13 13-1M-1 1 1-1M11 13l2-2" stroke="#c5c56a" strokeWidth="1" />
          </pattern>
        </defs>
        <rect width="100%" height="30" fill="#cbcbcb" />
        <rect x={ORIGIN} width={END - ORIGIN} height="30" fill="#ffff80" />
        <rect x={ORIGIN} width={END - ORIGIN} height="30" fill="url(#hatch)" />
        {ticks.map((i) => (
          <rect key={i} x={tx(i / 5)} y={i % 5 === 0 ? 17 : 21} width="1" height={i % 5 === 0 ? 12 : 8} fill="#666" />
        ))}
        {seconds.map((s) => (
          <g key={s}>
            <rect x={tx(s)} y="3" width="1" height="26" fill="#666" />
            <rect x={tx(s)} y="31" width="1" height="100%" fill="#bebebe" />
            <text x={tx(s) + 2} y="14" fill="#666" className="text-[12px] font-semibold">
              {s} <tspan className="text-[11px] font-black italic">秒</tspan>
            </text>
          </g>
        ))}
        <rect x={ORIGIN} y="41" width={END - ORIGIN} height="1" fill="#000" />
        <rect x={ORIGIN} y="78" width={END - ORIGIN} height="5" fill="#33cc33" />
        <rect x={ORIGIN} y="100" width={END - ORIGIN} height="5" fill="#ffff00" />
        <rect x={ORIGIN} y="122" width={END - ORIGIN} height="5" fill="#ffff00" />
        <rect x="310" width="2" height="100%" fill="#777" />
        <Key x={51} y={41.500} fill="#000" />
        <Key x={663} y={41.500} fill="#000" />
        <Key x={51} y={63.500} fill="#000" />
        <Key x={51} y={85.500} fill="#0000ff" />
        <Key x={357} y={85.500} fill="#3333cc" />
        <Key x={663} y={85.500} fill="#3333cc" />
        <Key x={51} y={107.500} fill="#0000ff" />
        <Key x={51} y={129.500} fill="#0000ff" />
      </svg>
      <div className="absolute right-0 bottom-3.5 flex h-[26px] w-[46px] items-center gap-[7px] overflow-hidden bg-[#cbcbcb] pl-1">
        <IconButton label="整屏显示"><Magnifier /></IconButton>
        <IconButton label="放大"><Magnifier plus /></IconButton>
      </div>
      <div className="flex h-3.5 shrink-0 items-center border-t border-white bg-[#f0f0f0]">
        <Chevron d={LEFT} className="mr-1 ml-1" />
        <span className="mr-[62px] h-full flex-1 bg-[#cdcdcd]" />
      </div>
    </section>
  );
}

export default function App() {
  return (
    <div className={`flex h-screen flex-col overflow-hidden bg-[#f7f7f7] ${FONT}`}>
      <header className="flex h-[58px] shrink-0 bg-[#f7f7f7]">
        {ribbon.map((item) => <RibbonItem key={item.lines.join("")} item={item} />)}
      </header>
      <div className="flex h-[23px] shrink-0 bg-white">
        <nav className="flex shrink-0 text-[13px] text-[#222]">
          <button type="button" className="flex w-8 items-center justify-end overflow-hidden border-b border-[#888] bg-[#f7f7f7] pr-2 whitespace-nowrap">装配体</button>
          {tabs.map(([latin, han, w]) => (
            <button key={latin + han} type="button" className={`border-y border-l border-[#888] bg-[#d3d3d3] whitespace-nowrap last:border-r ${w}`}>
              {latin && <span className="text-[11px]">{latin}</span>}
              {han}
            </button>
          ))}
        </nav>
        <div className="flex min-w-0 flex-1 border-t border-[#888] pl-[65px]">
          <div className="z-10 flex h-[30px] shrink-0 items-center gap-1.5">
            {viewTools.map(([label, icon, drop]) => (
              <React.Fragment key={label}>
                <IconButton label={label}>{icon}</IconButton>
                {drop && <IconButton label={`${label}选项`} className="h-5 w-2"><Caret className="text-[#999]" /></IconButton>}
              </React.Fragment>
            ))}
          </div>
          <div className="z-10 -mr-[3px] ml-auto flex h-[30px] items-center gap-1.5">
            {windowTools.map(([label, icon]) => <IconButton key={label} label={label}>{icon}</IconButton>)}
          </div>
        </div>
      </div>
      <div className="flex shrink-0 border-b border-[#e6e6f2]">
        <FeaturePanel />
        <ModelView />
      </div>
      <MotionToolbar />
      <div className="flex min-h-0 flex-1">
        <StudyTree />
        <span className="w-[3px] shrink-0 border-x border-[#4d5266] bg-white" />
        <Timeline />
      </div>
    </div>
  );
}
